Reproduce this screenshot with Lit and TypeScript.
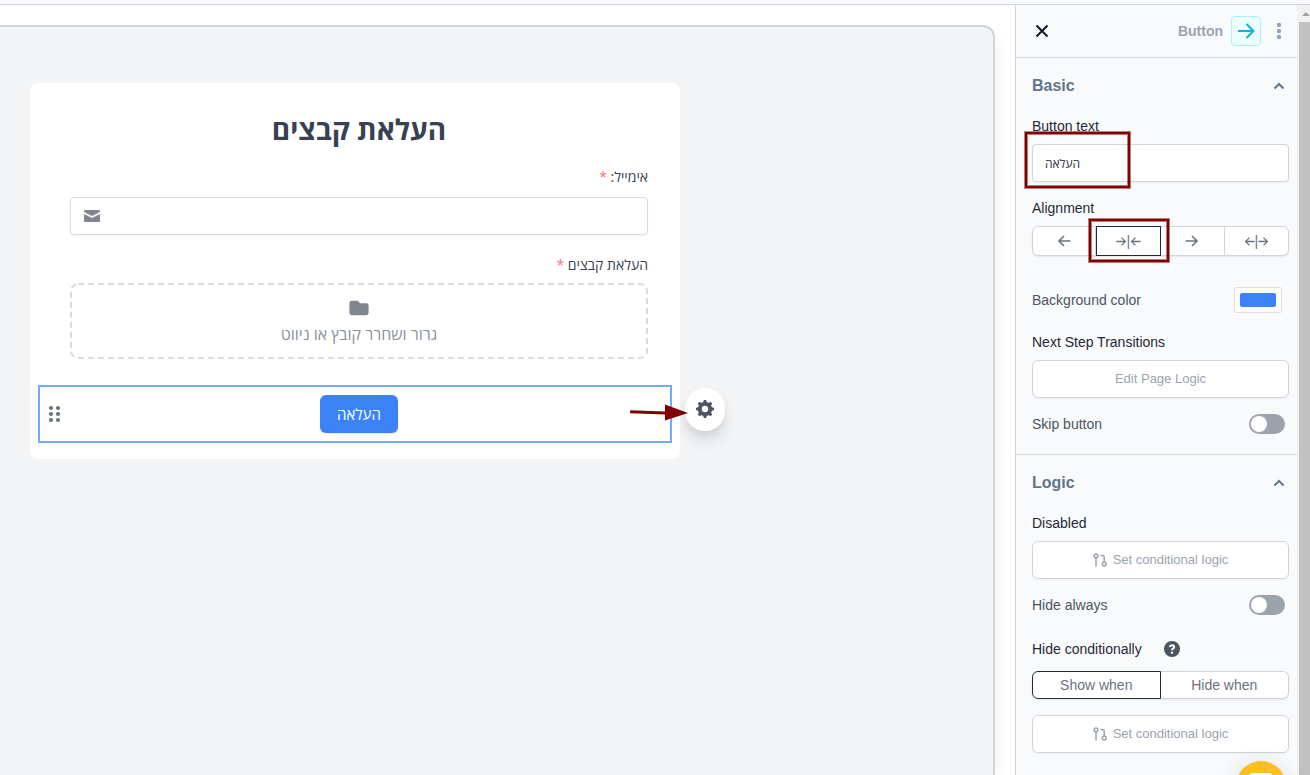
import { LitElement, html, css, svg } from "lit";
import { customElement, property, state } from "lit/decorators.js";

const arrowPaths: Record<string, unknown> = {
  left: svg`<path d="M13.5 7H2M7 2 2 7l5 5" />`,
  right: svg`<path d="M.5 7H12M7 2l5 5-5 5" />`,
};

const arrow = (dir: string, size = 14) => html`
  <svg class="arrow" width=${size} height=${size} viewBox="0 0 14 14" aria-hidden="true">
    ${arrowPaths[dir]}
  </svg>
`;

const branchIcon = html`
  <svg class="branch" width="14" height="14" viewBox="0 0 14 14" aria-hidden="true">
    <circle cx="3" cy="2.8" r="1.9" />
    <path d="M3 4.8V13.5M7.5 2.5H9.5Q11.2 2.5 11.2 4.2V9" />
    <circle cx="11.2" cy="11" r="1.9" />
  </svg>
`;

@customElement("toggle-row")
class ToggleRow extends LitElement {
  @property() label = "";

  static styles = css`
    :host {
      display: block;
    }
    .row {
      display: flex;
      justify-content: space-between;
      align-items: center;
      height: 20px;
      padding-right: 4px;
      color: #4b5563;
      font-size: 14px;
    }
    .switch {
      appearance: none;
      width: 36px;
      height: 20px;
      margin: 0;
      padding: 2px;
      border-radius: 10px;
      background: #9ca3af;
      display: flex;
    }
    .switch::before {
      content: "";
      width: 16px;
      height: 16px;
      border-radius: 50%;
      background: #fff;
    }
    .switch:checked {
      background: #3b82f6;
      justify-content: flex-end;
    }
  `;

  render() {
    return html`
      <label class="row">
        <span>${this.label}</span>
        <input class="switch" type="checkbox" role="switch" />
      </label>
    `;
  }
}

@customElement("panel-section")
class PanelSection extends LitElement {
  @property() heading = "";

  static styles = css`
    :host {
      display: block;
      padding: 16px 8px 20px 16px;
      border-bottom: 1px solid #d1d5db;
    }
    .head {
      display: flex;
      width: 100%;
      height: 24px;
      justify-content: space-between;
      align-items: center;
      margin: 0 0 18px;
      color: #64748b;
    }
    .title {
      margin: 0;
      font-size: 16px;
      line-height: 24px;
      font-weight: 700;
    }
    .fold {
      display: flex;
      padding: 0;
      border: 0;
      background: none;
      color: inherit;
    }
    svg {
      fill: none;
      stroke: currentColor;
      stroke-width: 2;
    }
  `;

  render() {
    return html`
      <div class="head">
        <h2 class="title">${this.heading}</h2>
        <button class="fold" aria-label="Collapse">
          <svg width="20" height="20" viewBox="0 0 20 20"><path d="M5.5 12.5 10 8l4.500 4.500" /></svg>
        </button>
      </div>
      <slot></slot>
    `;
  }
}

@customElement("form-canvas")
class FormCanvas extends LitElement {
  static styles = css`
    :host {
      display: block;
      flex: 1;
      min-width: 0;
      padding: 20px 20px 0 0;
      background: #fff;
      font-family: "Open Sans", "Noto Sans", "DejaVu Sans", sans-serif;
    }
    .canvas {
      height: 100%;
      box-sizing: border-box;
      padding: 56px 30px;
      background: #f3f4f6;
      border: solid #d1d5db;
      border-width: 2px 2px 0 0;
      border-radius: 0 12px 0 0;
      box-shadow: 4px 8px 16px rgba(0, 0, 0, 0.04);
    }
    .card {
      box-sizing: border-box;
      max-width: 650px;
      padding: 28px 32px 16px 40px;
      background: #fff;
      border-radius: 8px;
    }
    .title {
      margin: 0 0 20px;
      font-size: 28px;
      line-height: 36px;
      font-weight: 700;
      color: #374151;
      text-align: center;
    }
    .label {
      display: block;
      margin-bottom: 8px;
      font-size: 14px;
      line-height: 20px;
      color: #374151;
    }
    .title + .label {
      margin-bottom: 10px;
    }
    .star {
      color: #f87171;
    }
    .field {
      display: flex;
      align-items: center;
      box-sizing: border-box;
      height: 38px;
      margin-bottom: 20px;
      padding: 0 11px;
      border: 1px solid #d9dbde;
      border-radius: 4px;
      box-shadow: 0 1px 2px rgba(0, 0, 0, 0.05);
      color: #808791;
    }
    .field input {
      flex: 1;
      min-width: 0;
      border: 0;
      outline: 0;
      background: none;
      font: inherit;
    }
    svg {
      display: block;
      fill: currentColor;
    }
    .drop {
      display: flex;
      flex-direction: column;
      align-items: center;
      box-sizing: border-box;
      width: 100%;
      height: 76px;
      margin-bottom: 26px;
      padding: 13px 0 0;
      color: #808791;
    }
    .drop-wrap {
      position: relative;
    }
    .outline {
      position: absolute;
      inset: 0;
      width: 100%;
      height: 76px;
      fill: none;
      stroke: #d9dbdf;
      stroke-width: 2;
      stroke-dasharray: 6 4;
    }
    button {
      border: 0;
      background: none;
      font-family: inherit;
    }
    .drop-text {
      font-size: 16px;
      line-height: 20px;
      margin-top: 4px;
      color: #8d929b;
    }
    .selected {
      position: relative;
      display: flex;
      justify-content: center;
      margin: 0 -24px 0 -32px;
      padding: 8px 22px 8px 30px;
      border: 2px solid #76a9fa;
    }
    .submit {
      height: 38px;
      padding: 0 17px;
      border-radius: 6px;
      background: #3b82f6;
      color: #fff;
      font-size: 15px;
      font-weight: 500;
      box-shadow: 0 1px 2px rgba(0, 0, 0, 0.1);
    }
    .grip {
      position: absolute;
      left: 8px;
      top: 18px;
      padding: 0;
      color: #6b7280;
    }
    .gear {
      position: absolute;
      right: -55px;
      top: 1px;
      display: flex;
      align-items: center;
      justify-content: center;
      width: 40px;
      height: 43px;
      padding: 0 0 2px;
      border-radius: 22px;
      background: #fff;
      color: #4b5563;
      box-shadow: 0 10px 15px rgba(0, 0, 0, 0.1), 0 4px 6px rgba(0, 0, 0, 0.05);
    }
    .pointer {
      position: absolute;
      right: -19px;
      top: 16px;
      color: #800000;
    }
  `;

  render() {
    return html`
      <div class="canvas">
        <form class="card" @submit=${(e: Event) => e.preventDefault()}>
          <h1 class="title" dir="rtl">העלאת קבצים</h1>
          <label class="label" dir="rtl" for="email">אימייל: <span class="star">*</span></label>
          <div class="field">
            <svg width="20" height="20" viewBox="0 0 20 20">
              <path d="M2 5.900 10 9.900l8-4V5.300Q18 4 16.700 4H3.300Q2 4 2 5.300z" />
              <path d="m18 7.900-8 4-8-4v6.800Q2 16 3.300 16h13.400q1.300 0 1.300-1.300z" />
            </svg>
            <input id="email" type="email" />
          </div>
          <label class="label" dir="rtl" for="files">העלאת קבצים <span class="star">*</span></label>
          <div class="drop-wrap">
            <svg class="outline">
              <rect x="1" y="1" width="576" height="74" rx="7" />
            </svg>
            <button class="drop" id="files" type="button">
              <svg width="24" height="24" viewBox="0 0 20 20">
                <path d="M2 6a2 2 0 012-2h5l2 2h5a2 2 0 012 2v6a2 2 0 01-2 2H4a2 2 0 01-2-2V6z" />
              </svg>
              <span class="drop-text" dir="rtl">גרור ושחרר קובץ או ניווט</span>
            </button>
          </div>
          <div class="selected">
            <button class="grip" type="button" aria-label="Move">
              <svg width="13" height="18" viewBox="0 0 13 18">
                ${[3, 9, 15].map(
                  (y) => svg`<circle cx="3" cy=${y} r="2.1" /><circle cx="10" cy=${y} r="2.1" />`
                )}
              </svg>
            </button>
            <button class="submit">העלאה</button>
            <button class="gear" type="button" aria-label="Settings">
              <svg width="18" height="18" viewBox="0 0 18 18">
                <g transform="translate(9 9)">
                  ${[0, 45, 90, 135, 180, 225, 270, 315].map(
                    (a) => svg`<path transform="rotate(${a})" d="M-2.500-5.500-1-9H1l1.500 3.500z" />`
                  )}
                  <path fill-rule="evenodd" d="M0-7A7 7 0 1 0 0 7 7 7 0 1 0 0-7M0-3.200A3.200 3.200 0 1 1 0 3.200 3.200 3.200 0 1 1 0-3.200" />
                </g>
              </svg>
            </button>
            <svg class="pointer" width="60" height="18" viewBox="0 0 60 18">
              <path d="M1.200 7.200 36 8.500V1.500l23 8.500L36 17.500v-6L1.200 10.200z" />
            </svg>
          </div>
        </form>
      </div>
    `;
  }
}

@customElement("settings-panel")
class SettingsPanel extends LitElement {
  @state() align = 1;
  @state() when = "Show when";

  static styles = css`
    :host {
      display: block;
      box-sizing: border-box;
      width: 282px;
      overflow: hidden;
      background: #f9fafc;
      border-left: 1px solid #d1d5db;
      font-size: 14px;
      line-height: 20px;
    }
    button,
    input {
      font-family: inherit;
      box-sizing: border-box;
    }
    .head {
      display: flex;
      align-items: center;
      height: 52px;
      padding: 0 8px 0 16px;
      border-bottom: 1px solid #d1d5db;
    }
    .icon-btn {
      display: flex;
      padding: 0;
      border: 0;
      background: none;
      color: #94a3b8;
    }
    .close {
      margin-right: auto;
      color: #111827;
    }
    .kind {
      margin-right: 8px;
      font-weight: 700;
      color: #9ca3af;
    }
    .badge {
      display: flex;
      align-items: center;
      justify-content: center;
      box-sizing: border-box;
      width: 30px;
      height: 30px;
      margin-right: 8px;
      border: 1px solid #a5f3fc;
      border-radius: 4px;
      background: #ecfeff;
      color: #06b6d4;
    }
    svg {
      display: block;
      fill: none;
      stroke: currentColor;
      stroke-width: 2;
    }
    .arrow {
      stroke-width: 1.6;
    }
    .branch {
      stroke-width: 1.5;
    }
    .dots {
      fill: currentColor;
      stroke: none;
    }
    .label {
      display: flex;
      gap: 22px;
      align-items: center;
      height: 20px;
      margin: 0 0 8px;
      color: #1f2937;
    }
    .marked {
      position: relative;
    }
    .text {
      display: block;
      width: 100%;
      height: 38px;
      padding: 0 12px;
      border: 1px solid #d1d5db;
      border-radius: 4px;
      box-shadow: 0 1px 2px rgba(0, 0, 0, 0.05);
      background: #fff;
      color: #1f2937;
      font-family: "Open Sans", "Noto Sans", "DejaVu Sans", sans-serif;
      font-size: 12px;
    }
    .mark {
      position: absolute;
      border: 2px solid #800000;
      box-shadow: 0 0 0 1px rgba(128, 0, 0, 0.5), inset 0 0 0 1px rgba(128, 0, 0, 0.5);
      pointer-events: none;
    }
    .mark-text {
      left: -7px;
      top: -12px;
      width: 101px;
      height: 52px;
    }
    .mark-align {
      inset: -7px -8px -6px -7px;
    }
    .group {
      display: flex;
      height: 30px;
      margin: 0;
      padding: 0;
      box-sizing: border-box;
      border-radius: 6px;
      box-shadow: 0 1px 2px rgba(0, 0, 0, 0.08);
    }
    .short {
      height: 28px;
    }
    .cell {
      position: relative;
      flex: 1;
      display: flex;
    }
    .seg {
      flex: 1;
      display: flex;
      align-items: center;
      justify-content: center;
      padding: 0;
      border: 1px solid #d1d5db;
      border-left-width: 0;
      background: #fff;
      color: #6b7280;
      font-size: 14px;
    }
    .cell:first-child .seg {
      border-left-width: 1px;
      border-radius: 6px 0 0 6px;
    }
    .cell:last-child .seg {
      border-radius: 0 6px 6px 0;
    }
    .cell.on {
      z-index: 1;
    }
    .on .seg {
      border-left-width: 1px;
      border-color: #1f2937;
    }
    .color-row {
      display: flex;
      align-items: center;
      justify-content: space-between;
      height: 28px;
      margin: 30px 0 18px;
      padding-right: 7px;
      color: #4b5563;
    }
    .swatch {
      appearance: none;
      width: 48px;
      height: 26px;
      padding: 5px;
      border: 1px solid #e0e0e0;
      border-radius: 2px;
      background: #fff;
    }
    .swatch::-webkit-color-swatch-wrapper {
      padding: 0;
    }
    .swatch::-webkit-color-swatch {
      border: 0;
      border-radius: 2px;
    }
    .wide {
      display: flex;
      align-items: center;
      justify-content: center;
      gap: 6px;
      width: 100%;
      height: 38px;
      margin-bottom: 16px;
      padding-bottom: 2px;
      border: 1px solid #d1d5db;
      border-radius: 6px;
      background: #fff;
      box-shadow: 0 1px 2px rgba(0, 0, 0, 0.05);
      color: #9ca3af;
      font-size: 13px;
    }
    .cond {
      margin: 24px 0 12px;
    }
    .help {
      fill: #4b5563;
      stroke: none;
    }
    .help-mark {
      fill: none;
      stroke: #fff;
      stroke-width: 2;
    }
    .space {
      margin-bottom: 16px;
    }
  `;

  private conditionButton() {
    return html`<button class="wide">${branchIcon}<span>Set conditional logic</span></button>`;
  }

  render() {
    const aligns = [
      ["Left", arrow("left")],
      ["Center", html`${arrow("right", 11)}<span>|</span>${arrow("left", 11)}`],
      ["Right", arrow("right")],
      ["Justify", html`${arrow("left", 11)}<span>|</span>${arrow("right", 11)}`],
    ];
    return html`
      <header class="head">
        <button class="icon-btn close" aria-label="Close">
          <svg width="20" height="20" viewBox="0 0 20 20"><path d="m4.500 4.500 11 11M15.500 4.500l-11 11" /></svg>
        </button>
        <span class="kind">Button</span>
        <span class="badge">
          <svg width="20" height="20" viewBox="0 0 20 20"><path d="M2 10H17M10.500 3 17.500 10l-7 7" /></svg>
        </span>
        <button class="icon-btn" aria-label="More">
          <svg class="dots" width="20" height="20" viewBox="0 0 20 20">
            <circle cx="10" cy="4" r="2.200" /><circle cx="10" cy="10" r="2.200" /><circle cx="10" cy="16" r="2.200" />
          </svg>
        </button>
      </header>

      <panel-section heading="Basic">
        <label class="label" for="button-text">Button text</label>
        <div class="marked space">
          <input class="text" id="button-text" type="text" value="העלאה" />
          <div class="mark mark-text"></div>
        </div>
        <div class="label">Alignment</div>
        <div class="group" role="group" aria-label="Alignment">
          ${aligns.map(
            ([name, icon], i) => html`
              <div class="cell ${this.align === i ? "on" : ""}">
                <button class="seg" aria-label=${name as string} @click=${() => (this.align = i)}>${icon}</button>
                ${i === 1 ? html`<div class="mark mark-align"></div>` : ""}
              </div>
            `
          )}
        </div>
        <label class="color-row">
          <span>Background color</span>
          <input class="swatch" type="color" value="#3b82f6" />
        </label>
        <div class="label">Next Step Transitions</div>
        <button class="wide">Edit Page Logic</button>
        <toggle-row label="Skip button"></toggle-row>
      </panel-section>

      <panel-section heading="Logic">
        <div class="label">Disabled</div>
        ${this.conditionButton()}
        <toggle-row label="Hide always"></toggle-row>
        <div class="label cond">
          <span>Hide conditionally</span>
          <svg class="help" width="16" height="16" viewBox="0 0 16 16" aria-hidden="true">
            <circle cx="8" cy="8" r="8" />
            <path class="help-mark" d="M5.700 6Q6 4.300 8 4.300 10.200 4.300 10.200 6 10.200 7 9 7.600 8 8.100 8 9.300M8 10.700v2" />
          </svg>
        </div>
        <div class="group short space" role="group" aria-label="Hide conditionally">
          ${["Show when", "Hide when"].map(
            (name) => html`
              <div class="cell ${this.when === name ? "on" : ""}">
                <button class="seg" @click=${() => (this.when = name)}>${name}</button>
              </div>
            `
          )}
        </div>
        ${this.conditionButton()}
      </panel-section>
    `;
  }
}

@customElement("app-root")
class AppRoot extends LitElement {
  static styles = css`
    :host {
      position: relative;
      display: flex;
      flex-direction: column;
      height: 100vh;
      overflow: hidden;
      font-family: "Liberation Sans", Arial, sans-serif;
    }
    .top {
      height: 4px;
      flex: none;
      background: #f9fafc;
      border-bottom: 1px solid #d1d5db;
    }
    .body {
      flex: 1;
      min-height: 0;
      display: flex;
    }
    .scroll {
      display: flex;
      flex-direction: column;
      width: 11px;
      padding-left: 2px;
      background: #f1f1f1;
    }
    .up {
      display: block;
      flex: none;
      height: 17px;
      fill: #a3a3a3;
    }
    .thumb {
      flex: 1;
      background: #c1c1c1;
    }
    .chat {
      position: absolute;
      right: 24px;
      bottom: -36px;
      display: flex;
      justify-content: center;
      width: 50px;
      height: 50px;
      padding: 12px 0 0;
      border: 0;
      border-radius: 50%;
      background: #fbbf24;
      box-shadow: 0 4px 24px rgba(0, 0, 0, 0.14);
    }
    .chat svg {
      fill: #fff;
    }
  `;

  render() {
    return html`
      <div class="top"></div>
      <div class="body">
        <form-canvas></form-canvas>
        <settings-panel></settings-panel>
        <div class="scroll" aria-hidden="true">
          <svg class="up" width="11" height="17" viewBox="0 0 11 17"><path d="m3 11 4-4 4 4z" /></svg>
          <div class="thumb"></div>
        </div>
      </div>
      <button class="chat" aria-label="Chat">
        <svg width="22" height="24" viewBox="0 0 22 24">
          <path d="M2 0H20Q22 0 22 2V18Q22 20 20 20H13L8 24V20H2Q0 20 0 18V2Q0 0 2 0Z" />
        </svg>
      </button>
    `;
  }
}
